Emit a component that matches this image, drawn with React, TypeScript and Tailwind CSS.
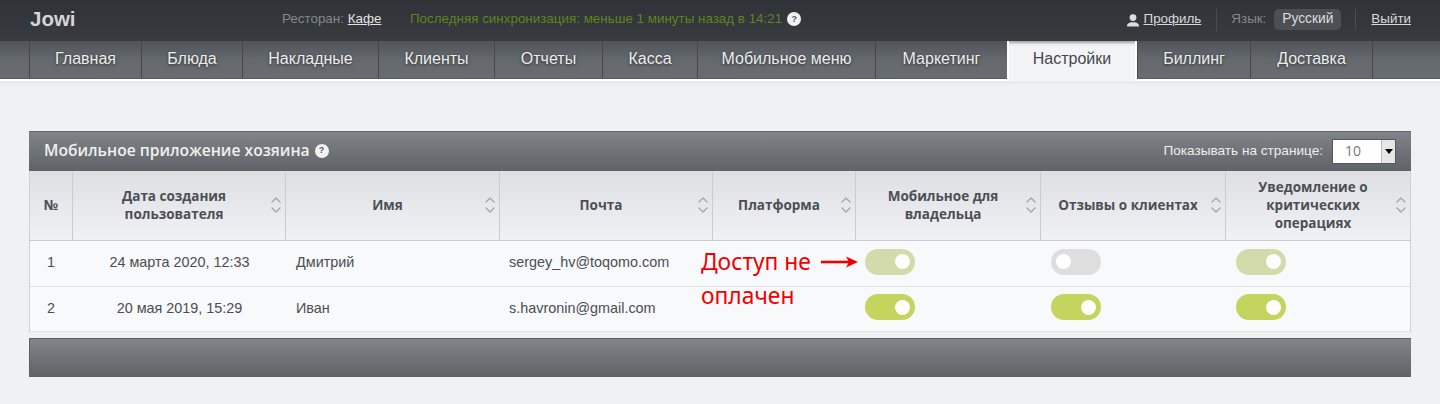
import { ChevronDown, ChevronUp } from 'lucide-react'

const sans = "font-['Liberation_Sans',Arial,sans-serif]"
const open = "font-['Open_Sans','Noto_Sans',sans-serif]"

const tabs = [
  { label: 'Главная', w: 'w-[112px]' },
  { label: 'Блюда', w: 'w-[101px]' },
  { label: 'Накладные', w: 'w-[136px]' },
  { label: 'Клиенты', w: 'w-[116px]' },
  { label: 'Отчеты', w: 'w-[108px]' },
  { label: 'Касса', w: 'w-[95px]' },
  { label: 'Мобильное меню', w: 'w-[178px]' },
  { label: 'Маркетинг', w: 'w-[132px]' },
  { label: 'Настройки', w: 'w-[130px]', active: true },
  { label: 'Биллинг', w: 'w-[113px]' },
  { label: 'Доставка', w: 'w-[122px]' },
]

const cols = 'grid grid-cols-[42px_213px_214px_213px_143px_185px_185px_185px]'
const togglePad = ['pl-[10px]', 'pl-[11px]', 'pl-[11px]']

function Help() {
  return (
    <span className={`inline-flex h-[14px] w-[14px] items-center justify-center rounded-full bg-[#f2f2f2] text-[9px] font-bold text-[#555a5f] ${sans}`}>
      ?
    </span>
  )
}

function Head({ children, sort = true, first }: { children: React.ReactNode; sort?: boolean; first?: boolean }) {
  return (
    <div
      className={`relative flex items-center justify-center pb-[2px] text-center font-bold leading-[18px] text-[#4b4f54] ${
        first ? 'text-[14px]' : 'border-l border-[#c9ccd0] pr-[10px] text-[13.5px]'
      }`}
    >
      <span>{children}</span>
      {sort && (
        <span className="absolute right-[1px] top-[34px] flex -translate-y-1/2 flex-col text-[#a4a8ab]">
          <ChevronUp className="-mb-[6px] h-4 w-4" strokeWidth={2} />
          <ChevronDown className="h-4 w-4" strokeWidth={2} />
        </span>
      )}
    </div>
  )
}

function Toggle({ on, faded }: { on?: boolean; faded?: boolean }) {
  const bg = !on ? 'bg-[#dedede]' : faded ? 'bg-[#d3daac]' : 'bg-[#c3d55f]'
  return (
    <div className={`flex h-[26px] w-[50px] items-center rounded-full px-[5px] ${bg} ${on ? 'justify-end' : 'justify-start'}`}>
      <span className="h-[15px] w-[15px] rounded-full bg-white" />
    </div>
  )
}

function Row({
  n,
  date,
  name,
  mail,
  h,
  textPb,
  toggles,
  faded,
  children,
}: {
  n: number
  date: string
  name: string
  mail: string
  h: string
  textPb: string
  toggles: boolean[]
  faded: boolean[]
  children?: React.ReactNode
}) {
  return (
    <div className={`${cols} ${h} border-b border-[#dfe1e4] bg-[#f8f9fb] text-[14.4px] text-[#4a4e52] ${sans}`}>
      <div className={`flex items-center justify-center ${textPb}`}>{n}</div>
      <div className={`flex items-center justify-center pl-[2px] ${textPb}`}>{date}</div>
      <div className={`flex items-center pl-[11px] ${textPb}`}>{name}</div>
      <div className={`flex items-center pl-[10px] ${textPb}`}>{mail}</div>
      <div className="relative">{children}</div>
      {toggles.map((on, i) => (
        <div key={i} className={`flex items-center pb-[4px] ${togglePad[i]}`}>
          <Toggle on={on} faded={faded[i]} />
        </div>
      ))}
    </div>
  )
}

export default function App() {
  return (
    <div className={`h-[404px] w-[1440px] overflow-hidden bg-[#f0f1f3] ${sans}`}>
      <header className="flex h-[41px] items-center bg-gradient-to-b from-[#2f3236] to-[#383b40] pb-[2px] text-[13.4px] text-[#85888b]">
        <div className="ml-[30px] w-[252px] text-[20.5px] font-bold text-[#d5d6d7]">Jowi</div>
        <div className="w-[128px]">
          Ресторан: <span className="text-[#e2e3e4] underline">Кафе</span>
        </div>
        <div className="flex items-center gap-[5px] text-[#5f8420]">
          Последняя синхронизация: меньше 1 минуты назад в 14:21
          <Help />
        </div>
        <div className="ml-auto flex items-center">
          <svg viewBox="0 0 14 14" className="mr-[4px] h-[14px] w-[14px] fill-[#dcdcdc]">
            <circle cx="7" cy="4.6" r="3.4" />
            <path d="M1 13.5c0-3 2.2-3.6 4-4.2h4c1.8.6 4 1.2 4 4.2z" />
          </svg>
          <span className="text-[#d9dadb] underline">Профиль</span>
          <span className="ml-[15px] mr-[14px] h-[22px] w-px bg-[#4a4d52]" />
          <span>Язык:</span>
          <span className="ml-[8px] flex h-[21px] w-[67px] items-center justify-center rounded-[5px] bg-[#4c4f54] text-[13.8px] text-[#dcdddd]">
            Русский
          </span>
          <span className="ml-[14px] mr-[15px] h-[21px] w-px bg-[#4a4d52]" />
          <span className="mr-[29px] text-[#d9dadb] underline">Выйти</span>
        </div>
      </header>

      <nav className="h-[38px] border-b border-[#575b60] bg-gradient-to-b from-[#50545a] via-[#64696e] to-[#686c71] pl-[29px]">
        <div className="flex h-[37px]">
          {tabs.map((t) =>
            t.active ? (
              <div
                key={t.label}
                className={`${t.w} z-10 flex h-[40px] items-center justify-center border-x-2 border-white bg-[#f3f4f5] pb-[4px] text-[16px] text-[#44474b] shadow-[inset_0_4px_3px_-2px_rgba(0,0,0,0.35)]`}
              >
                {t.label}
              </div>
            ) : (
              <div
                key={t.label}
                className={`${t.w} flex items-center justify-center border-l border-[#44484c] pb-[1px] text-[16px] text-[#eceded] [text-shadow:0_1px_3px_rgba(0,0,0,0.6)]`}
              >
                {t.label}
              </div>
            ),
          )}
          <div className="w-px bg-[#44484c]" />
        </div>
      </nav>
      <div className="h-[2px] bg-white" />
      <div className="h-[3px] bg-[#e9eaec]" />

      <main className="ml-[29px] mt-[47px] w-[1382px]">
        <div className="flex h-[40px] items-center justify-between border-t border-[#63676c] bg-gradient-to-b from-[#808388] to-[#5f6367] pb-[1px] pl-[15px] pr-[15px]">
          <div className={`flex items-center gap-[5px] text-[15.65px] font-semibold text-[#f0f0f0] ${open}`}>
            Мобильное приложение хозяина
            <Help />
          </div>
          <div className="flex items-center text-[13.6px] text-[#eeeeee]">
            Показывать на странице:
            <div className="ml-[9px] flex h-[25px] w-[64px] items-center border border-[#55595d] bg-white">
              <span className={`flex-1 pb-[2px] pl-[12px] text-[14px] text-[#777] ${open}`}>10</span>
              <span className="flex h-full w-[14px] items-center justify-center border-l border-[#bbb] bg-[#e6e6e6]">
                <span className="h-0 w-0 border-x-[4px] border-t-[5px] border-x-transparent border-t-black" />
              </span>
            </div>
          </div>
        </div>

        <div className="border-x border-[#cfd1d4]">
          <div className={`${cols} h-[70px] border-b border-[#c9ccd0] bg-gradient-to-b from-[#dddfe2] to-[#f0f1f4] ${open}`}>
            <Head sort={false} first>№</Head>
            <Head>Дата создания<br />пользователя</Head>
            <Head>Имя</Head>
            <Head>Почта</Head>
            <Head>Платформа</Head>
            <Head>Мобильное для<br />владельца</Head>
            <Head>Отзывы о клиентах</Head>
            <Head>Уведомление о<br />критических<br />операциях</Head>
          </div>
          <Row
            n={1}
            date="24 марта 2020, 12:33"
            name="Дмитрий"
            mail="sergey_hv@toqomo.com"
            h="h-[46px]"
            textPb="pb-[2px]"
            toggles={[true, false, true]}
            faded={[true, false, true]}
          >
            {/* annotation drawn over the table */}
            <div className="absolute left-[-11px] top-[4px] z-10 w-[140px] font-['Noto_Sans','Open_Sans',sans-serif] text-[22.8px] leading-[34px] text-[#f00000]">
              Доступ не
              <br />
              оплачен
            </div>
            <svg viewBox="0 0 38 12" className="absolute left-[109px] top-[15px] z-10 h-[12px] w-[38px] fill-[#f00000]">
              <rect x="0" y="4.7" width="30" height="2.6" />
              <path d="M25 0.5 L37 6 L25 11.5 L28 6 Z" />
            </svg>
          </Row>
          <Row
            n={2}
            date="20 мая 2019, 15:29"
            name="Иван"
            mail="s.havronin@gmail.com"
            h="h-[45px]"
            textPb="pb-0"
            toggles={[true, true, true]}
            faded={[false, false, false]}
          />
        </div>

        <div className="mt-[6px] h-[39px] border-l border-t border-[#5d6166] bg-gradient-to-b from-[#818488] to-[#5f6367]" />
      </main>
    </div>
  )
}
